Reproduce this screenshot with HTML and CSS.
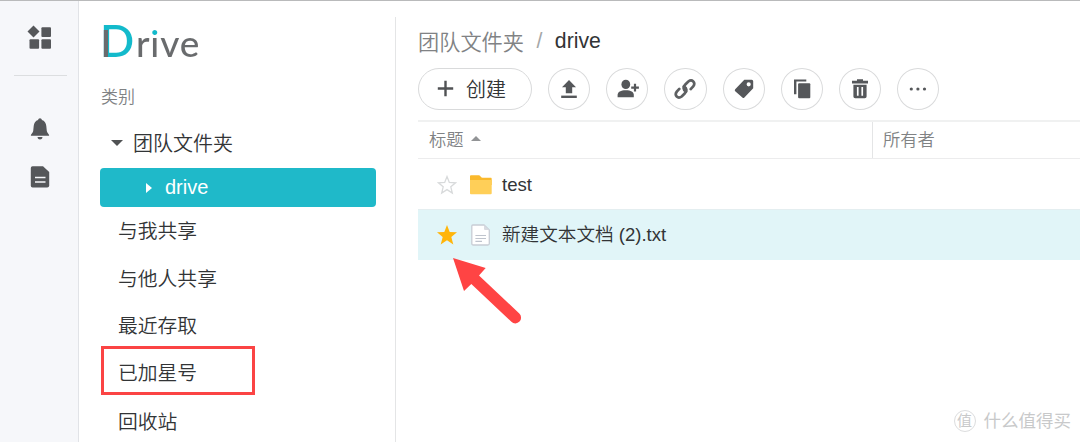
FILE: index.html
```html
<!DOCTYPE html>
<html lang="zh-CN">
<head>
  <meta charset="UTF-8" />
  <meta name="viewport" content="width=device-width, initial-scale=1.0"/>
  <title>Drive</title>
  <link rel="stylesheet" href="styles.css">
</head>
<body>

  <div class="app">
    <div class="rail">
      <svg class="rail-apps" width="26" height="26" viewBox="0 0 26 26">
        <path d="M6.5 0.5 L12.5 6.5 L6.5 12.5 L0.5 6.5 Z" stroke-linejoin="round" />
        <rect x="14.4" y="2.3" width="9.6" height="9.6" rx="1" />
        <rect x="2.5" y="14.2" width="9.6" height="9.6" rx="1" />
        <rect x="14.4" y="14.2" width="9.6" height="9.6" rx="1" />
      </svg>
      <div class="rail-line"></div>
      <svg class="rail-bell" width="20" height="22" viewBox="0 0 20 22">
        <path d="M10 0.3 C11 0.3 11.7 1 11.9 2 C14.6 2.8 16 5 16.3 8 L16.8 13 C17 15 19.2 16 19.2 17.8 H0.8 C0.8 16 3 15 3.2 13 L3.7 8 C4 5 5.4 2.8 8.1 2 C8.3 1 9 0.3 10 0.3 Z" />
        <path d="M7.5 19 H12.5 C12.2 20.8 11.3 21.5 10 21.5 C8.7 21.5 7.8 20.8 7.5 19 Z" />
      </svg>
      <svg class="rail-doc" width="20" height="22" viewBox="0 0 20 22">
        <path d="M2.5 0.2 H13 L19.2 6 V19.5 Q19.2 21.5 17.2 21.5 H2.5 Q0.8 21.5 0.8 19.5 V2 Q0.8 0.2 2.5 0.2 Z" />
        <path d="M5 11.5 H15.5 M5 16 H15.5" stroke="#f6f7fa" stroke-width="1.5" />
      </svg>
    </div>

    <div class="sidebar">
      <div class="logo"><span class="logo-d">D</span><span class="logo-rest">rive</span></div>
      <div class="side-title">类别</div>
      <div class="nav-parent"><span class="caret-down"></span>团队文件夹</div>
      <div class="nav-active"><span class="caret-right"></span>drive</div>
      <div class="nav-list">
        <div class="nav-item">与我共享</div>
        <div class="nav-item">与他人共享</div>
        <div class="nav-item">最近存取</div>
        <div class="nav-item marked">已加星号</div>
        <div class="nav-item">回收站</div>
      </div>
    </div>

    <div class="main">
      <div class="crumbs"><span>团队文件夹</span><span class="slash">/</span><span class="current">drive</span></div>

      <div class="toolbar">
        <div class="create">
          <svg width="17" height="17" viewBox="0 0 17 17"><path d="M8.5 0.8 V16.2 M0.8 8.5 H16.2" stroke="#505254" stroke-width="2.4" /></svg>
          <span>创建</span>
        </div>
        <div class="tool">
          <svg width="24" height="24" viewBox="0 0 24 24">
            <path d="M12 3 L19 10.2 H15.2 V16.2 H8.8 V10.2 H5 Z" />
            <rect x="4.2" y="18.6" width="15.6" height="2.4" />
          </svg>
        </div>
        <div class="tool">
          <svg width="24" height="24" viewBox="0 0 24 24">
            <ellipse cx="10.8" cy="7.4" rx="4.4" ry="4.7" />
            <path d="M2.6 20.2 V18 C2.6 14.8 5.8 13.2 10.8 13.2 C15.8 13.2 18.8 14.8 18.8 18 V20.2 Z" />
            <path d="M20 6.8 V14.6 M16.2 10.7 H23.9" stroke="#55575a" stroke-width="2.2" />
          </svg>
        </div>
        <div class="tool">
          <svg width="24" height="24" viewBox="0 0 24 24">
            <g fill="none" stroke="#5e6062" stroke-width="2.7" stroke-linecap="round">
              <path d="M13 14.6 C9.8 12.8 10 9.8 12.3 7.5 L15.3 4.5 C19.2 1.7 23 5.6 20.2 9.4 L17.7 12.1" />
              <path d="M11 9.4 C14.2 11.2 14 14.2 11.7 16.5 L8.7 19.5 C4.8 22.3 1 18.4 3.8 14.6 L6.3 11.9" />
            </g>
          </svg>
        </div>
        <div class="tool">
          <svg width="24" height="24" viewBox="0 0 24 24">
            <path fill-rule="evenodd" d="M12.3 2.8 H19.7 Q21.2 2.8 21.2 4.3 V11.3 L12.4 20.5 Q11.4 21.5 10.4 20.5 L3.2 14.3 Q2.2 13.3 3.2 12.3 Z M16.7 5.2 A2.1 2.1 0 1 0 16.7 9.4 A2.1 2.1 0 1 0 16.7 5.2 Z" />
          </svg>
        </div>
        <div class="tool">
          <svg width="24" height="24" viewBox="0 0 24 24">
            <path d="M4 2.4 H16.3 V4.6 H6.4 V17.2 H4 Z" />
            <rect x="8.1" y="6.3" width="12.2" height="15" rx="1" />
          </svg>
        </div>
        <div class="tool">
          <svg width="24" height="24" viewBox="0 0 24 24">
            <path d="M9 2.2 H15 V3.8 H20 V6.4 H4 V3.8 H9 Z" />
            <path fill-rule="evenodd" d="M5.4 7.7 H18.6 V19.5 Q18.6 21.3 16.8 21.3 H7.2 Q5.4 21.3 5.4 19.5 Z M8.9 10 V18.8 H10.6 V10 Z M13.4 10 V18.8 H15.1 V10 Z" />
          </svg>
        </div>
        <div class="tool">
          <svg width="24" height="24" viewBox="0 0 24 24">
            <circle cx="5.3" cy="12" r="1.6" /><circle cx="11.9" cy="12" r="1.6" /><circle cx="18.5" cy="12" r="1.6" />
          </svg>
        </div>
      </div>

      <div class="table-head">
        <div class="col-title">标题<span class="sort"></span></div>
        <div class="col-owner">所有者</div>
      </div>

      <div class="row">
        <svg class="star" width="20" height="20" viewBox="0 0 20 20">
          <path d="M10 1.6 L12.3 7.4 L18.6 7.8 L13.8 11.8 L15.3 18 L10 14.6 L4.7 18 L6.2 11.8 L1.4 7.8 L7.7 7.4 Z" fill="none" stroke="#d8dadb" stroke-width="1.3" />
        </svg>
        <svg class="icon" width="22" height="20" viewBox="0 0 22 20">
          <path d="M0 1 Q0 0.3 1 0.3 H9 Q10 0.3 11 2 Q11.5 2.8 12.5 2.8 H21 Q21.7 2.8 21.7 4 V10 H0 Z" fill="#fab92c" />
          <path d="M0 5 H21.7 V18.2 Q21.7 19.3 20.7 19.3 H1 Q0 19.3 0 18.2 Z" fill="#ffcf58" />
        </svg>
        <span>test</span>
      </div>
      <div class="row selected">
        <svg class="star" width="20" height="20" viewBox="0 0 20 20">
          <path d="M10 0 L12.7 7 L20 7.3 L14.3 12 L16.3 19.5 L10 15.3 L3.7 19.5 L5.7 12 L0 7.3 L7.3 7 Z" fill="#ffb50a" />
        </svg>
        <svg class="icon" width="22" height="22" viewBox="0 0 22 22">
          <path d="M2.8 1 H14 L19.3 6 V19.5 Q19.3 21 17.8 21 H3.3 Q1.8 21 1.8 19.5 V2 Q1.8 1 2.8 1 Z" fill="#fff" stroke="#c8cdd5" stroke-width="1.3" />
          <path d="M14 1 V5 Q14 6 15 6 H19.3 Z" fill="#d8dbe1" />
          <path d="M5.4 11.5 H16 M5.4 14.5 H16 M5.4 17.3 H12" stroke="#bfc4cd" stroke-width="1.2" />
        </svg>
        <span class="file-name">新建文本文档 (2).txt</span>
      </div>
    </div>
  </div>

  <!-- annotation arrow -->
  <svg class="arrow" width="72" height="70" viewBox="0 0 72 70">
    <path d="M3 2 L35.7 12 L29 19.6 L69.3 57.5 A5.6 5.6 0 0 1 61.4 65.8 L21.3 27.9 L14 35 Z" fill="#ff4444" />
  </svg>

  <div class="watermark"><span class="wm-badge">值</span><span>什么值得买</span></div>

</body>
</html>
```
FILE: styles.css
```css
* {
  box-sizing: border-box;
}

body {
  margin: 0;
  width: 1080px;
  height: 442px;
  overflow: hidden;
  position: relative;
  font-family: "Liberation Sans", "Noto Sans CJK SC", sans-serif;
  font-weight: 350;
  font-size: 20px;
  color: #323436;
  background-color: #fff;
}

svg {
  display: block;
  flex-shrink: 0;
  fill: #55575a;
}

.app {
  display: flex;
  height: 442px;
  border-top: 1px solid #b9babb;
}

.rail {
  width: 79px;
  background-color: #f6f7fa;
  border-right: 1px solid #e1e3e7;
  display: flex;
  flex-direction: column;
  align-items: center;
}

.rail-apps {
  margin: 24px 0 0 2px;
}

.rail-line {
  width: 53px;
  height: 1px;
  margin: 24px 0 42px 2px;
  background-color: #dcdee0;
}

.rail-bell {
  margin-left: 1px;
}

.rail-doc {
  margin: 26px 0 0 1px;
}

.sidebar {
  width: 317px;
  padding-left: 21px;
  background: linear-gradient(#e4e5e6, #e4e5e6) right 16px / 1px 430px no-repeat;
}

.logo {
  display: flex;
  align-items: baseline;
  height: 82px;
  padding-top: 10px;
  font-family: Lato, sans-serif;
}

.logo-d {
  width: 36px;
  font-size: 45px;
  font-weight: 600;
  line-height: 58px;
  color: transparent;
  background: linear-gradient(#696b6d, #696b6d) 0 19px / 8px 36px no-repeat, #13bacb;
  -webkit-background-clip: text;
  background-clip: text;
}

.logo-rest {
  font-size: 37px;
  font-weight: 500;
  line-height: 46px;
  letter-spacing: 0.8px;
  color: transparent;
  background: linear-gradient(#13bacb 0 16px, #696b6d 16px);
  -webkit-background-clip: text;
  background-clip: text;
}

.side-title {
  height: 26px;
  line-height: 29px;
  padding-left: 1px;
  font-size: 17px;
  color: #808284;
}

.nav-parent {
  display: flex;
  align-items: center;
  height: 48px;
  padding: 0 0 3px 11px;
  margin-top: 11px;
}

.caret-down {
  border: 6px solid transparent;
  border-top-color: #505254;
  border-bottom: 0;
  margin-right: 10px;
}

.nav-active {
  display: flex;
  align-items: center;
  width: 276px;
  height: 39px;
  padding-left: 46px;
  border-radius: 4px;
  color: #fff;
  background-color: #1fb9c9;
}

.caret-right {
  border: 5.5px solid transparent;
  border-left: 6px solid #fff;
  border-right: 0;
  margin-right: 13px;
}

.nav-list {
  padding-top: 1px;
}

.nav-item {
  width: 154px;
  height: 47.7px;
  line-height: 46px;
  padding-left: 18px;
  font-size: 19.8px;
}

.nav-item.marked {
  height: 49px;
  margin: -5px 0 4px 1px;
  padding-left: 14px;
  line-height: 49px;
  border: 3px solid #fb4444;
}

.main {
  flex: 1;
  padding-left: 22px;
}

.crumbs {
  display: flex;
  align-items: center;
  height: 52px;
  margin-top: 15px;
  padding-bottom: 3px;
  font-size: 21.2px;
  color: #808284;
}

.slash {
  margin: 0 12.5px;
  color: #a5a7a8;
}

.current {
  color: #323436;
}

.toolbar {
  display: flex;
  gap: 16px;
}

.create {
  display: flex;
  align-items: center;
  width: 114px;
  height: 42px;
  padding: 0 0 2px 18px;
  gap: 12px;
  border: 1px solid #d9dadb;
  border-radius: 21px;
}

.tool {
  display: flex;
  align-items: center;
  justify-content: center;
  width: 42.2px;
  height: 42px;
  border: 1px solid #d9dadb;
  border-radius: 50%;
}

.table-head {
  display: flex;
  height: 39px;
  margin-top: 10px;
  border-top: 2px solid #f0f1f1;
  border-bottom: 1px solid #ececed;
  font-size: 17.3px;
  line-height: 36px;
  color: #808284;
}

.col-title {
  display: flex;
  align-items: center;
  width: 454px;
  padding-left: 11px;
}

.sort {
  border: 5px solid transparent;
  border-bottom-color: #929496;
  border-top: 0;
  margin: 0 0 4px 7px;
}

.col-owner {
  flex: 1;
  padding-left: 10px;
  border-left: 1px solid #e4e5e6;
}

.row {
  display: flex;
  align-items: center;
  height: 50px;
  padding: 1px 0 0 19px;
  font-size: 18.6px;
}

.row.selected {
  height: 51px;
  padding-top: 0;
  border-top: 1px solid #e4eef0;
  background-color: #e1f5f8;
}

.star {
  margin-right: 13px;
}

.icon {
  margin-right: 10px;
}

.file-name {
  padding-bottom: 5px;
}

.arrow {
  position: absolute;
  left: 450px;
  top: 256px;
}

.watermark {
  position: absolute;
  right: 9px;
  bottom: 10px;
  display: flex;
  align-items: center;
  gap: 8px;
  font-size: 17.5px;
  font-weight: 400;
  line-height: 22px;
  color: #c8c9ca;
}

.wm-badge {
  width: 22px;
  height: 22px;
  border: 1px solid #dcddde;
  border-radius: 50%;
  font-size: 15px;
  line-height: 19px;
  text-align: center;
}
```
